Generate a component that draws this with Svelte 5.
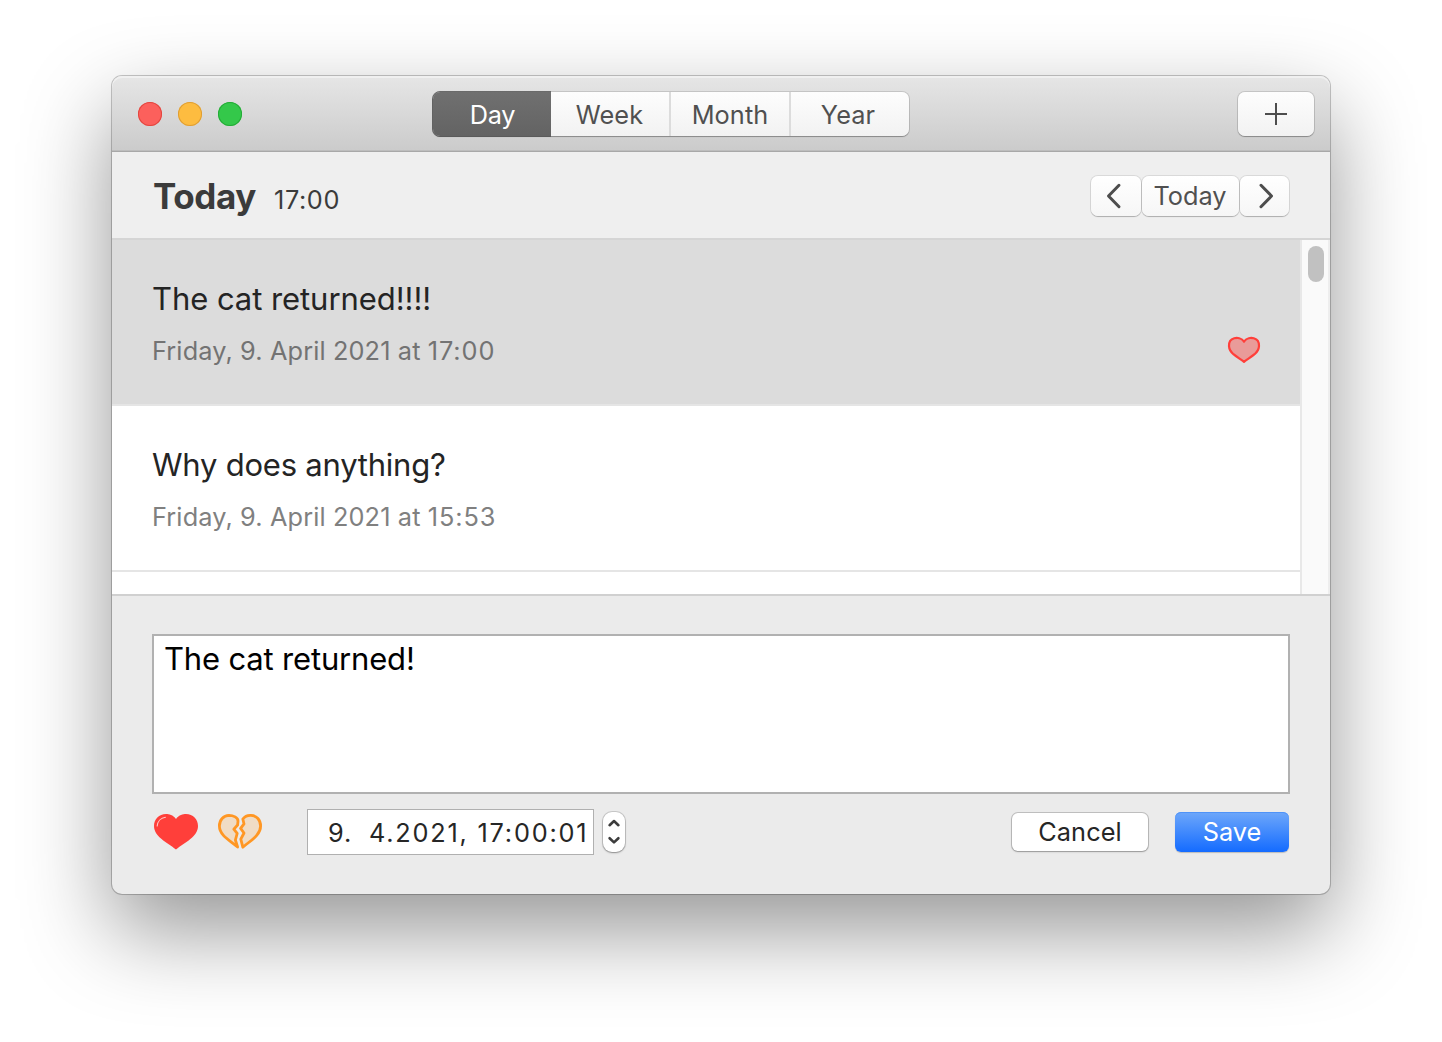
<script>
  const ranges = ['Day', 'Week', 'Month', 'Year'];
  let active = $state('Day');
  let selected = $state(0);

  const entries = [
    { title: 'The cat returned!!!!', date: 'Friday, 9. April 2021 at', time: '17:00', loved: true },
    { title: 'Why does anything?', date: 'Friday, 9. April 2021 at', time: '15:53', loved: false },
  ];
</script>

<main class="desktop">
  <div class="window">
    <header class="titlebar">
      <div class="lights">
        <span class="light close"></span>
        <span class="light minimize"></span>
        <span class="light zoom"></span>
      </div>
      <div class="segments">
        {#each ranges as range}
          <button
            class="segment {range.toLowerCase()}"
            class:active={active === range}
            onclick={() => (active = range)}><span>{range}</span></button>
        {/each}
      </div>
      <button class="add" aria-label="Add entry">
        <svg width="22" height="22" viewBox="0 0 22 22"><path d="M11 0V22M0 11H22" /></svg>
      </button>
    </header>

    <section class="subheader">
      <h1>Today</h1>
      <span class="time">17:00</span>
      <nav class="pager">
        <button class="prev" aria-label="Previous day">
          <svg width="16" height="26" viewBox="0 0 16 26"><path d="M13 2.3L2.5 13L13 23.7" /></svg>
        </button>
        <button class="today"><span>Today</span></button>
        <button class="next" aria-label="Next day">
          <svg width="16" height="26" viewBox="0 0 16 26"><path d="M3 2.3L13.5 13L3 23.7" /></svg>
        </button>
      </nav>
    </section>

    <section class="content">
      <div class="list">
        {#each entries as entry, i}
          <article class="entry" class:selected={selected === i}>
            <div class="entry-text">
              <div class="entry-title">{entry.title}</div>
              <div class="entry-date">{entry.date} <span class="entry-time">{entry.time}</span></div>
            </div>
            {#if entry.loved}
              <svg class="loved" width="34" height="28" viewBox="0 0 34 28">
                <path d="M17 5.7C14.6 1.8 9.8 1.6 7.2 2.3C3.6 3.3 1.8 6.1 2 10.1C2.2 13.5 3.8 15.9 6.4 18.2C9.6 20.9 13.4 23.1 17 25.8C20.6 23.1 24.4 20.9 27.6 18.2C30.2 15.9 31.8 13.5 32 10.1C32.2 6.1 30.4 3.3 26.8 2.3C24.2 1.6 19.4 1.8 17 5.7Z" />
              </svg>
            {/if}
          </article>
        {/each}
      </div>
      <div class="scrollbar"><div class="thumb"></div></div>
    </section>

    <section class="editor">
      <div class="textarea"><span>The cat returned!</span></div>
      <div class="actions">
        <svg class="heart" width="44" height="36" viewBox="0 0 44 36">
          <path class="fill" d="M22 5C19 .8 15 0 12 0C5 0 0 5 0 12C0 23 13 28 22 35.6C31 28 44 23 44 12C44 5 39 0 32 0C29 0 25 .8 22 5Z" />
          <path class="gloss" d="M3.2 12C3.6 7.2 7 3.8 11.4 3.2" />
        </svg>
        <svg class="broken" width="44" height="36" viewBox="0 0 44 36">
          <path d="M20 7.4C20.4 3.4 15 1.4 11 1.4C5.4 1.6 1.4 6 1.4 12C1.4 21.4 12 26.6 19.6 33L17.4 26L19.2 19.4L15.8 15.2L19.6 11Z" />
          <path d="M24.8 5C27 2.2 30 1.3 33 1.4C38.6 1.6 42.6 6 42.6 12C42.6 21.4 32.4 26.6 24.8 33.2L22.8 25.2L26 19L22.6 14.4L26 9.8Z" />
        </svg>
        <div class="datefield"><span class="day">9.</span><span class="rest">4.2021, 17:00:01</span></div>
        <div class="stepper">
          <svg width="24" height="42" viewBox="0 0 24 42"><path d="M7.6 14.2L12 10L16.4 14.2M7.6 27.2L12 31.4L16.4 27.2" /></svg>
        </div>
        <button class="cancel"><span>Cancel</span></button>
        <button class="save"><span>Save</span></button>
      </div>
    </section>
  </div>
</main>

<style>
  :global(body) {
    background: #fff;
  }
  .desktop {
    box-sizing: border-box;
    width: 1442px;
    height: 1042px;
    padding: 76px 112px 0;
    overflow: hidden;
    font-family: Inter, 'Liberation Sans', sans-serif;
    font-size: 25.3px;
  }
  .desktop * {
    box-sizing: border-box;
  }
  button {
    display: flex;
    align-items: center;
    justify-content: center;
    margin: 0;
    padding: 0;
    border: 0;
    font: inherit;
  }
  span {
    white-space: nowrap;
  }
  svg {
    display: block;
    fill: none;
  }
  .window {
    display: flex;
    flex-direction: column;
    width: 1218px;
    height: 818px;
    border-radius: 10px;
    background: #ebebeb;
    box-shadow:
      0 0 0 1px rgba(0, 0, 0, 0.2),
      0 0 2px rgba(0, 0, 0, 0.08),
      0 36px 88px rgba(0, 0, 0, 0.42);
  }
  .titlebar {
    display: flex;
    justify-content: space-between;
    flex: 0 0 76px;
    padding: 15px 16px 0 26px;
    border-radius: 10px 10px 0 0;
    border-bottom: 1px solid #a8a8a8;
    background: linear-gradient(#e6e6e6, #cbcbcb);
    box-shadow: inset 0 2px 0 #f0f0f0, inset 0 -1px 0 #bdbdbd;
  }
  .lights {
    display: flex;
    gap: 16px;
    width: 295px;
    padding-top: 11px;
  }
  .light {
    width: 24px;
    height: 24px;
    border-radius: 50%;
  }
  .close {
    background: #fc605c;
    box-shadow: inset 0 0 0 1px #e2463f;
  }
  .minimize {
    background: #fdbc40;
    box-shadow: inset 0 0 0 1px #df9e34;
  }
  .zoom {
    background: #34c84a;
    box-shadow: inset 0 0 0 1px #24ab36;
  }
  .segments {
    display: flex;
    width: 476px;
    height: 44px;
    margin-top: 1px;
    border-radius: 7px;
    background: linear-gradient(#fdfdfd, #f2f2f2);
    box-shadow: 0 0 0 1px rgba(0, 0, 0, 0.12), 0 1px 1px rgba(0, 0, 0, 0.25);
  }
  .segment {
    flex: 0 0 120px;
    border-right: 2px solid #dcdcdc;
    background: none;
    color: #505050;
    letter-spacing: 0.1px;
  }
  .segment:first-child {
    flex-basis: 118px;
    padding-left: 1px;
    border-right: 0;
    border-radius: 7px 0 0 7px;
    letter-spacing: -0.2px;
  }
  .segment.week {
    padding-right: 1px;
  }
  .segment:last-child {
    flex-basis: 118px;
    border-right: 0;
    padding-right: 4px;
  }
  .segment.active {
    background: linear-gradient(#707070, #636363);
    box-shadow: -1px 0 0 #626262, 0 -1px 0 #6a6a6a, 0 1px 0 #5a5a5a;
    color: #fff;
  }
  .add {
    width: 76px;
    height: 44px;
    margin-top: 1px;
    margin-left: auto;
    border-radius: 7px;
    background: linear-gradient(#fdfdfd, #f2f2f2);
    box-shadow: 0 0 0 1px rgba(0, 0, 0, 0.12), 0 1px 1px rgba(0, 0, 0, 0.25);
  }
  .add svg {
    stroke: #4d4d4d;
    stroke-width: 2;
  }
  .subheader {
    display: flex;
    align-items: baseline;
    flex: 0 0 88px;
    padding: 4px 41px 0 41px;
    border-bottom: 2px solid #d5d5d5;
    background: #efefef;
    color: #3b3b3b;
  }
  h1 {
    margin: 0;
    font-size: 35px;
    font-weight: 700;
    line-height: 80px;
    letter-spacing: -0.4px;
    width: 121px;
  }
  .time {
    letter-spacing: 0.6px;
  }
  .pager {
    display: flex;
    gap: 1px;
    align-self: flex-start;
    margin: 20px 0 0 auto;
  }
  .pager button {
    width: 49px;
    height: 40px;
    border-radius: 7px;
    background: linear-gradient(#fff, #f6f6f6);
    box-shadow: 0 0 0 1px rgba(0, 0, 0, 0.09), 0 1px 1px rgba(0, 0, 0, 0.2);
    color: #505050;
  }
  .pager .prev {
    width: 50px;
    padding-right: 4px;
  }
  .pager .next {
    padding-left: 2px;
  }
  .pager .today {
    width: 97px;
    padding: 0 1px 1px 0;
  }
  .pager svg {
    stroke: #4d4d4d;
    stroke-width: 3;
    stroke-linecap: round;
    stroke-linejoin: round;
  }
  .content {
    display: flex;
    flex: 0 0 356px;
    overflow: hidden;
    border-bottom: 2px solid #d0d0d0;
    background: #fff;
  }
  .list {
    width: 1188px;
  }
  .entry {
    display: flex;
    justify-content: space-between;
    height: 166px;
    padding: 39px 39px 0 40px;
    border-bottom: 2px solid #e5e5e5;
  }
  .selected {
    background: #dcdcdc;
  }
  .entry-title {
    color: #242424;
    font-size: 31px;
    line-height: 40px;
    letter-spacing: -0.22px;
  }
  .selected .entry-title {
    letter-spacing: -0.06px;
  }
  .entry-date {
    margin-top: 16px;
    color: #808080;
    line-height: 32px;
    letter-spacing: 0.13px;
  }
  .entry-time {
    letter-spacing: 0.9px;
  }
  .selected .entry-date {
    color: #737373;
  }
  .loved {
    margin-top: 57px;
    fill: #e99b99;
    stroke: #ff3f3a;
    stroke-width: 2.2;
    stroke-linejoin: round;
  }
  .scrollbar {
    width: 30px;
    padding: 6px 0 0 6px;
    border-left: 2px solid #e8e8e8;
    border-right: 2px solid #eee;
    background: #fafafa;
  }
  .thumb {
    width: 16px;
    height: 36px;
    border-radius: 8px;
    background: #c1c1c1;
  }
  .editor {
    flex: 1;
    padding: 38px 41px 0 40px;
  }
  .textarea {
    width: 1138px;
    height: 160px;
    padding: 3px 10px;
    border: 2px solid #b1b1b1;
    background: #fff;
    color: #000;
    font-size: 31px;
    line-height: 40px;
    letter-spacing: -0.17px;
  }
  .actions {
    display: flex;
    align-items: flex-start;
    padding-top: 15px;
  }
  .heart {
    margin: 5px 20px 0 2px;
  }
  .heart .fill {
    fill: #ff3f3a;
  }
  .heart .gloss {
    stroke: #ffc9c7;
    stroke-width: 1.1;
    stroke-linecap: round;
  }
  .broken {
    margin: 5px 45px 0 0;
    fill: #f0dcc5;
    stroke: #ff9724;
    stroke-width: 2.8;
    stroke-linejoin: round;
  }
  .datefield {
    display: flex;
    width: 287px;
    height: 46px;
    padding-left: 20px;
    border: 1px solid #b0b0b0;
    background: #fff;
    color: #262626;
    line-height: 45px;
    letter-spacing: 1.78px;
  }
  .day {
    width: 41px;
    letter-spacing: 0.9px;
  }
  .stepper {
    width: 22px;
    height: 40px;
    margin: 3px 0 0 9px;
    border-radius: 9px;
    background: #fff;
    box-shadow: 0 0 0 1px rgba(0, 0, 0, 0.14), 0 1px 2px rgba(0, 0, 0, 0.3);
  }
  .stepper svg {
    margin: -1px;
    stroke: #3c3c3c;
    stroke-width: 2.6;
    stroke-linecap: round;
    stroke-linejoin: round;
  }
  .cancel {
    width: 136px;
    height: 38px;
    margin: 4px 27px 0 auto;
    padding-bottom: 1px;
    border-radius: 6px;
    background: #fff;
    box-shadow: 0 0 0 1px rgba(0, 0, 0, 0.18), 0 1px 2px rgba(0, 0, 0, 0.22);
    color: #262626;
    letter-spacing: 0.1px;
  }
  .save {
    width: 114px;
    height: 40px;
    margin-top: 3px;
    padding-bottom: 1px;
    border-radius: 6px;
    background: linear-gradient(#6ea7fa, #146bff);
    box-shadow: inset 0 1px 0 #4f93f8, 0 1px 1px rgba(0, 0, 0, 0.2);
    color: #fff;
  }
</style>
